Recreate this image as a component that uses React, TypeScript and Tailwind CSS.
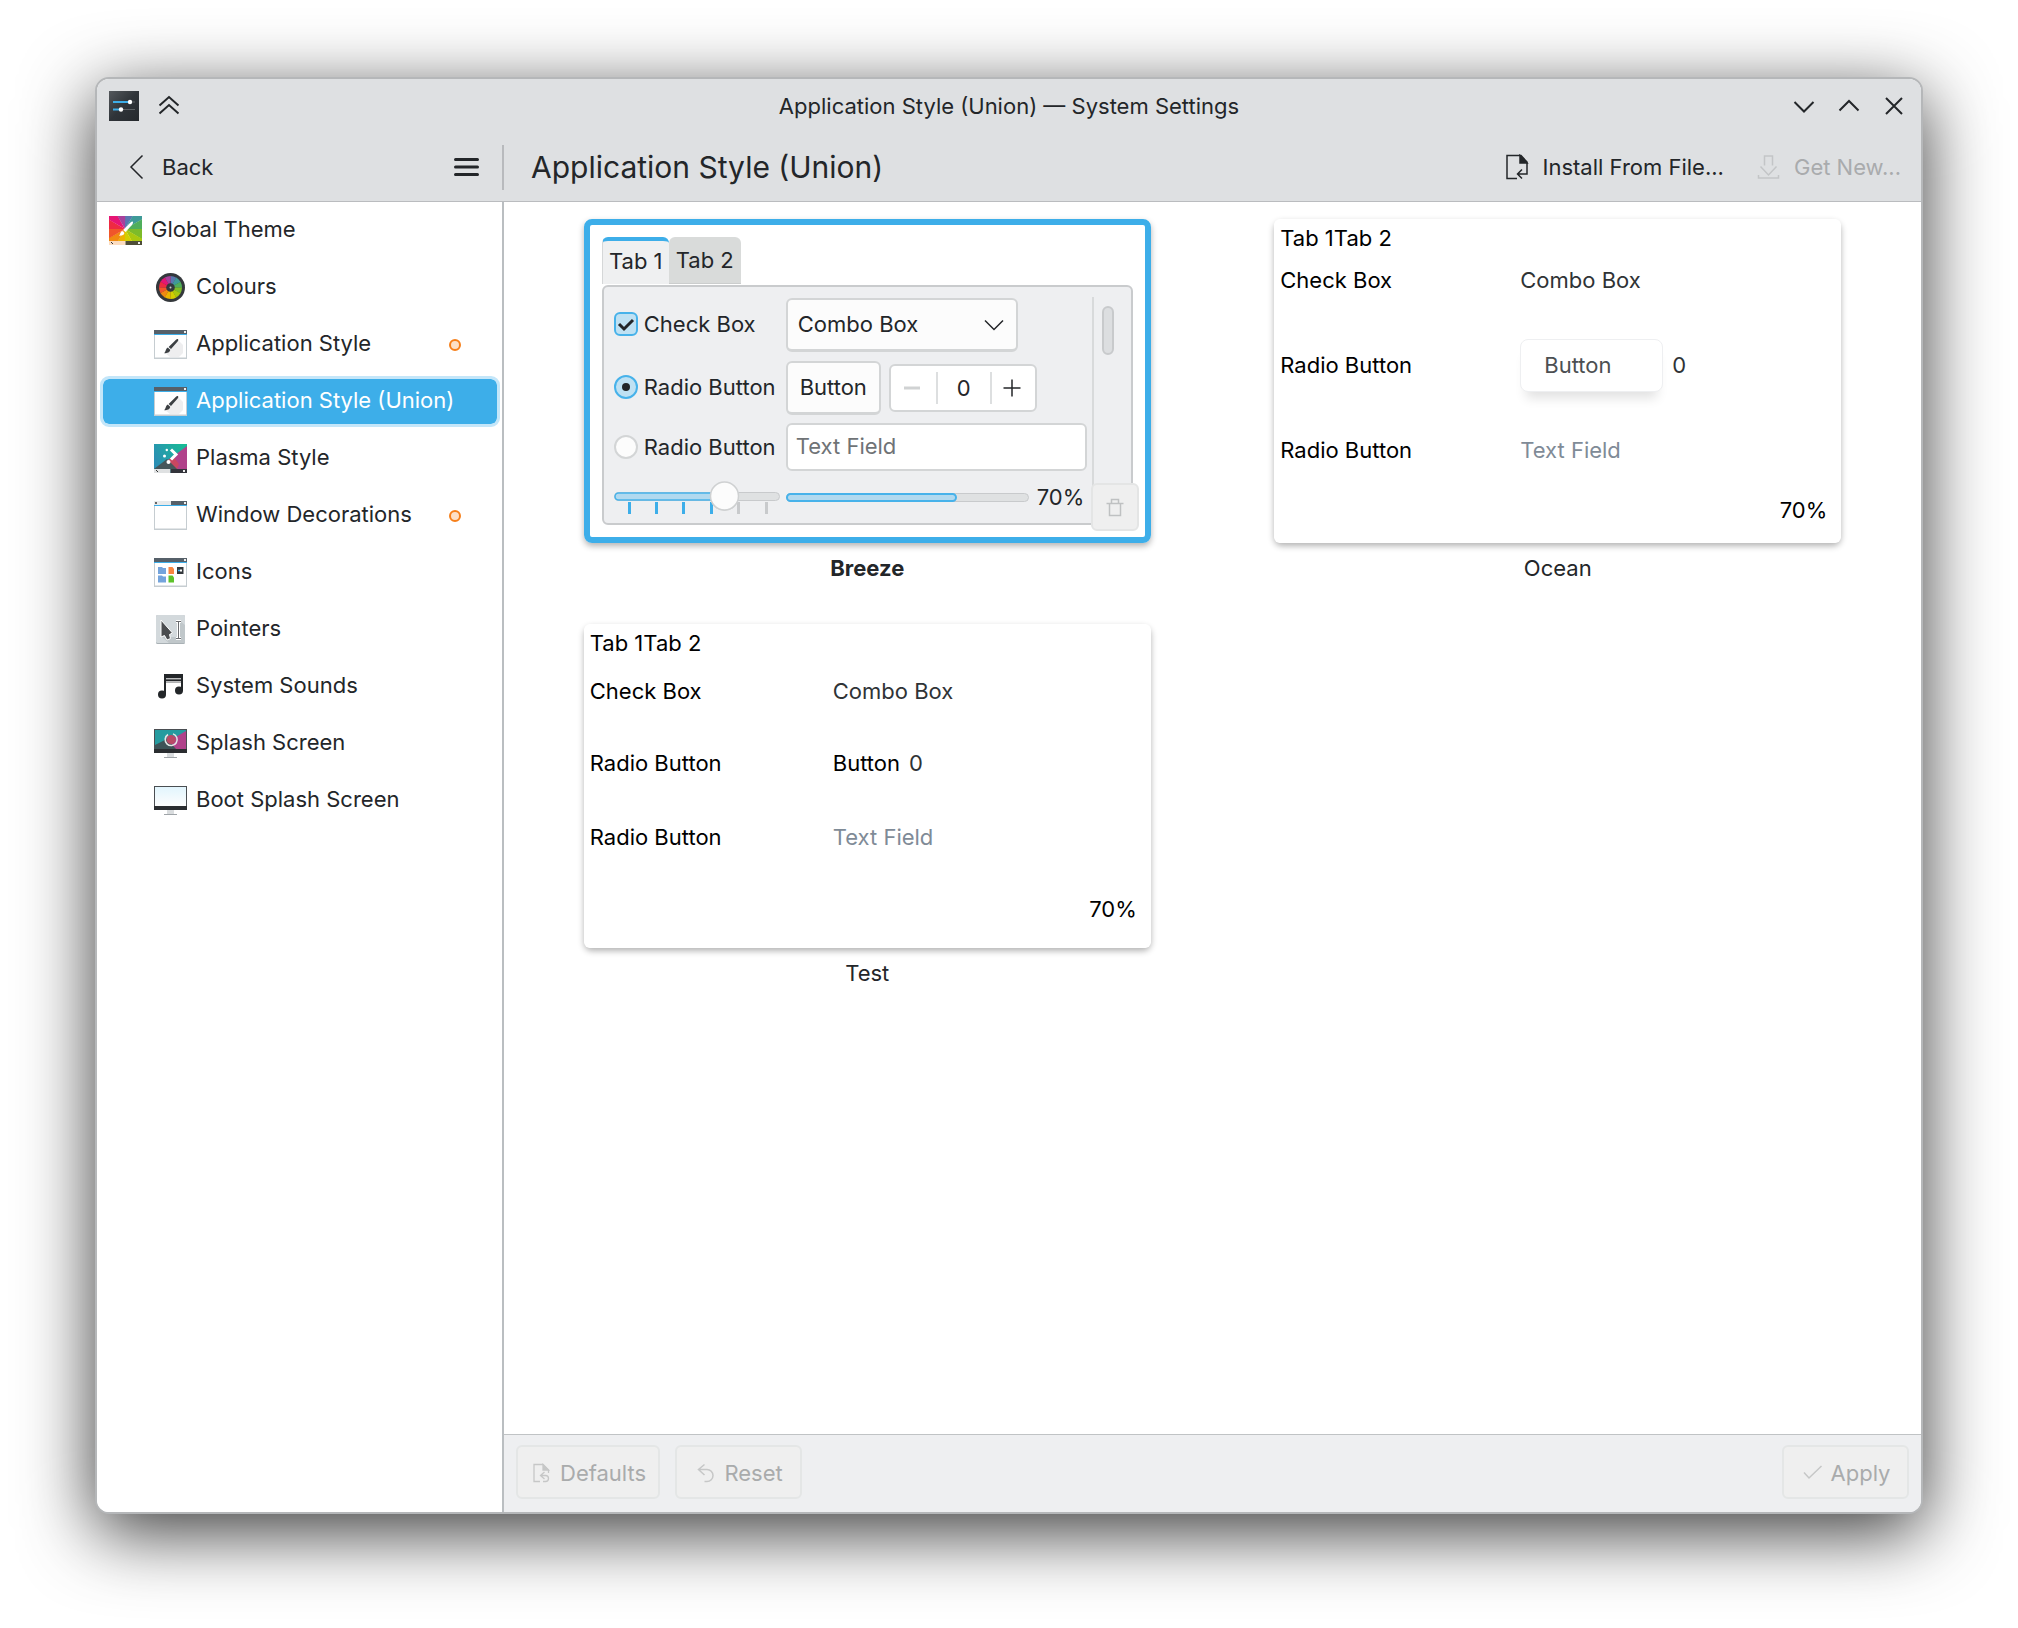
import React from "react";
import clsx from "clsx";

type IconProps = { className?: string };

const WHEEL = [
  "#5a78b0", "#3f9a98", "#4fae5c", "#7dbb2a", "#a9c80f", "#d3cf00",
  "#ecb400", "#f08a12", "#f0562a", "#ee2a42", "#e61574", "#a8409c",
];

function Wheel({ cx, cy, r }: { cx: number; cy: number; r: number }) {
  return (
    <>
      {WHEEL.map((color, i) => {
        const a = ((i * 30 - 90) * Math.PI) / 180;
        const b = ((i * 30 - 59) * Math.PI) / 180;
        return (
          <path
            key={color}
            fill={color}
            d={`M${cx} ${cy}L${cx + r * Math.cos(a)} ${cy + r * Math.sin(a)}A${r} ${r} 0 0 1 ${cx + r * Math.cos(b)} ${cy + r * Math.sin(b)}Z`}
          />
        );
      })}
    </>
  );
}

function GlobalThemeIcon() {
  return (
    <svg width="33" height="29" viewBox="0 0 33 29" className="shrink-0">
      <clipPath id="gt">
        <rect width="33" height="25" />
      </clipPath>
      <g clipPath="url(#gt)">
        <Wheel cx={16} cy={13} r={24} />
      </g>
      <path d="M23.5 5.5c1 .6.6 1.8-.6 3.4L16.500 16l-2.300-2L20.500 7.500c1.300-1.300 2.300-2.300 3-2z" fill="#fff" />
      <path d="M13.300 15l2 1.800c.2 2.200-2.600 3-5.300 3 1.500-1.300 1.200-4.300 3.300-4.800z" fill="#fff" />
      <rect y="25" width="16.500" height="4" fill="#fbdcc0" />
      <rect x="16.500" y="25" width="16.500" height="4" fill="#4e4d38" />
      <path d="M2 26l2 2" stroke="#333" />
      <rect x="29" y="26" width="2" height="2" fill="#eee" />
    </svg>
  );
}

function ColoursIcon() {
  return (
    <svg width="33" height="29" viewBox="0 0 33 29" className="shrink-0">
      <circle cx="16.500" cy="14.500" r="14.500" fill="#34383c" />
      <Wheel cx={16.5} cy={14.5} r={11.5} />
      <circle cx="16.500" cy="14.500" r="4.300" fill="#34383c" />
      <circle cx="16.500" cy="14.500" r="1" fill="#ccc" />
    </svg>
  );
}

function WindowFrame({ split, children }: { split?: boolean; children?: React.ReactNode }) {
  return (
    <svg width="33" height="29" viewBox="0 0 33 29" className="shrink-0">
      <rect width="33" height="29" fill="#c6cdd1" />
      <rect x="1" y="5" width="31" height="22.500" fill="#fff" />
      <rect width="33" height="4" fill="#566069" />
      {split && <rect width="17" height="4" fill="#e8eaeb" />}
      {split && <rect x="1" y="1" width="2" height="2" fill="#666" />}
      <rect y="4" width="33" height="1" fill="#3daee9" />
      <rect x="30" y="1" width="2" height="2" fill="#eee" />
      {children}
    </svg>
  );
}

function AppStyleIcon() {
  return (
    <WindowFrame>
      <path d="M24 10l5 5v8l-4 4h-9l-5-4z" fill="#eeeeef" />
      <path d="M24 9.200c.7.500.3 1.500-.6 2.500L17 19l-2.400-2L21 10.700c1.200-1.100 2.200-1.900 3-1.500z" fill="#3c4043" />
      <path d="M13.800 17.600l2.400 2.100c0 2.400-3 3.500-6 3.500 1.700-1.200 1.500-4.900 3.600-5.600z" fill="#3c4043" />
    </WindowFrame>
  );
}

function WindowDecoIcon() {
  return <WindowFrame split />;
}

function IconsIcon() {
  return (
    <WindowFrame>
      <path d="M4 9h4l1 1h3v6H4zM4 17.500h4l1 1h3v6H4z" fill="#74a4dc" />
      <path d="M14.500 9h4l1.500 2v5h-5.500z" fill="#f98640" />
      <path d="M14.500 17.500h4l1.500 2v5h-5.500z" fill="#5ec32a" />
      <rect x="23" y="9" width="6.500" height="7" fill="#33383c" />
      <path d="M24 12.500h2" stroke="#3daee9" strokeWidth="1.500" />
      <path d="M26 12.500h2" stroke="#fff" strokeWidth="2" />
    </WindowFrame>
  );
}

function PlasmaIcon() {
  return (
    <svg width="33" height="29" viewBox="0 0 33 29" className="shrink-0">
      <linearGradient id="teal" x1="0" x2="1" y1="0.500" y2="0">
        <stop offset="0" stopColor="#2b8fb4" />
        <stop offset="1" stopColor="#16bf93" />
      </linearGradient>
      <rect width="33" height="29" fill="url(#teal)" />
      <path d="M33 2v24H21L13 17z" fill="#b0428a" />
      <path d="M13 17l6-5 6 8-2 5h-5z" fill="#c94760" />
      <path d="M0 25l13-10 10 10z" fill="#45565a" />
      <rect y="25" width="16.500" height="4" fill="#dfe1e2" />
      <rect x="16.500" y="25" width="16.500" height="4" fill="#33343b" />
      <path d="M2 26l2 2" stroke="#333" />
      <rect x="29" y="26" width="2" height="2" fill="#eee" />
      <path d="M17 5.500l5 5-5 5" stroke="#fff" strokeWidth="3" fill="none" />
      <circle cx="12.800" cy="6" r="1.200" fill="#fff" />
      <circle cx="10.500" cy="12" r="1.500" fill="#fff" />
      <circle cx="14.500" cy="18" r="2" fill="#fff" />
    </svg>
  );
}

function PointersIcon() {
  return (
    <svg width="33" height="29" viewBox="0 0 33 29" className="shrink-0">
      <rect x="2" width="29" height="29" rx="1.500" fill="#a9b1b5" />
      <rect x="2" width="29" height="28" rx="1.500" fill="#d3d9dc" />
      <path d="M8 22l7 6h16V10l-5-4-2 16z" fill="#c0c7ca" />
      <path d="M7 5v17l3.500-1.500L13 25l3.500-1.500-1-4 3-1.500z" fill="#4b4d4f" stroke="#fff" strokeWidth="1" />
      <path d="M22 6.500h5M22 23.500h5M24.500 6.500v17" stroke="#fff" strokeWidth="3" />
      <path d="M22 6.500h5M22 23.500h5M24.500 6.500v17" stroke="#6b6d70" strokeWidth="1" />
    </svg>
  );
}

function SoundsIcon() {
  return (
    <svg width="33" height="29" viewBox="0 0 33 29" className="shrink-0">
      <path d="M10 2h19v17h-2V10.500H12V22h-2z" fill="#232629" />
      <path d="M12 6.800h15M12 9.800h15" stroke="#fff" strokeWidth="1" />
      <circle cx="8" cy="22.500" r="4" fill="#232629" />
      <circle cx="25" cy="18.500" r="4" fill="#232629" />
    </svg>
  );
}

function MonitorIcon({ splash }: { splash?: boolean }) {
  return (
    <svg width="33" height="29" viewBox="0 0 33 29" className="shrink-0">
      <linearGradient id="sky" x1="0" x2="0" y1="0" y2="1">
        <stop offset="0" stopColor="#e2f5fd" />
        <stop offset="1" stopColor="#fdfdfd" />
      </linearGradient>
      <rect width="33" height="24" fill="#4a4e52" />
      <rect y="20" width="33" height="4" fill="#2a2d30" />
      <rect x="1" y="1" width="31" height="19" fill="url(#sky)" />
      {splash && (
        <>
          <rect x="1" y="1" width="31" height="19" fill="#259b9f" />
          <path d="M32 2v18H21L13 13z" fill="#b0428a" />
          <path d="M1 16l12-6 9 10H1z" fill="#3d5357" />
          <circle cx="17" cy="10.500" r="4.500" fill="#b84a66" />
          <path d="M14 5.500a6 6 0 1 0 5-.6" stroke="#e5e5e5" strokeWidth="1.500" fill="none" />
        </>
      )}
      <rect x="13" y="24" width="7" height="4" fill="#d9dcde" />
      <rect x="10" y="28" width="13" height="1" fill="#9fa4a8" />
    </svg>
  );
}

function SplashIcon() {
  return <MonitorIcon splash />;
}

function SettingsIcon() {
  return (
    <svg width="30" height="30" viewBox="0 0 30 30" className="shrink-0">
      <linearGradient id="dark" x1="0" x2="1" y1="0" y2="1">
        <stop offset="0" stopColor="#54585c" />
        <stop offset="0.500" stopColor="#2f3439" />
        <stop offset="1" stopColor="#25292d" />
      </linearGradient>
      <rect width="30" height="30" fill="url(#dark)" />
      <path d="M4 11h22M4 18.500h22" stroke="#5d6164" strokeWidth="1" />
      <path d="M4 11h17M4 18.500h8" stroke="#3daee9" strokeWidth="2" />
      <circle cx="21" cy="11" r="2.200" fill="#fff" />
      <circle cx="12" cy="18.500" r="2.200" fill="#fff" />
    </svg>
  );
}

// Line drawings share a 24px box
function Line({ d, className, size = 24, width = 1.5 }: IconProps & { d: string; size?: number; width?: number }) {
  return (
    <svg
      width={size}
      height={size}
      viewBox={`0 0 ${size} ${size}`}
      fill="none"
      stroke="currentColor"
      strokeWidth={width}
      className={clsx("shrink-0", className)}
    >
      <path d={d} />
    </svg>
  );
}

function InstallIcon() {
  return (
    <svg width="24" height="26" viewBox="0 0 24 26" fill="none" stroke="currentColor" strokeWidth="1.500" className="shrink-0">
      <path d="M12 24.500H2V1.500h14L22 8v12H12.500M17 15.500L12.500 20l4.500 4.500" />
      <path d="M15 1.500V9h7z" fill="currentColor" />
    </svg>
  );
}

function DefaultsIcon() {
  return (
    <svg width="24" height="24" viewBox="0 0 24 24" fill="none" stroke="currentColor" strokeWidth="1.300" className="shrink-0">
      <path d="M10 20.500H4V3.500h9l5.500 5.500v3M14.500 11l-4 3.500 4 3.500M10.500 14.500h5a3 3 0 0 1 0 6h-2.500" />
      <path d="M13 3.500V9h5.500z" fill="currentColor" />
    </svg>
  );
}

const items = [
  { label: "Colours", icon: ColoursIcon },
  { label: "Application Style", icon: AppStyleIcon, changed: true },
  { label: "Application Style (Union)", icon: AppStyleIcon, active: true },
  { label: "Plasma Style", icon: PlasmaIcon },
  { label: "Window Decorations", icon: WindowDecoIcon, changed: true },
  { label: "Icons", icon: IconsIcon },
  { label: "Pointers", icon: PointersIcon },
  { label: "System Sounds", icon: SoundsIcon },
  { label: "Splash Screen", icon: SplashIcon },
  { label: "Boot Splash Screen", icon: MonitorIcon },
];

function TitleBar() {
  return (
    <div className="h-[54px] px-3 flex items-center justify-between">
      <div className="w-[120px] flex items-center gap-[15px]">
        <SettingsIcon />
        <button aria-label="Keep above">
          <Line size={30} width={2} d="M5.500 14.500L15 6l9.500 8.500M5.500 22.500L15 14l9.500 8.500" />
        </button>
      </div>
      <p>Application Style (Union) — System Settings</p>
      <div className="w-[120px] flex items-center gap-[15px]">
        <button aria-label="Minimise">
          <Line size={30} width={2} d="M5.500 11l9.500 9.500 9.500-9.500" />
        </button>
        <button aria-label="Maximise">
          <Line size={30} width={2} d="M5.500 19.500L15 10l9.500 9.500" />
        </button>
        <button aria-label="Close">
          <Line size={30} width={2} d="M7 7l16 16M23 7L7 23" />
        </button>
      </div>
    </div>
  );
}

function ToolBar() {
  return (
    <div className="h-[68px] flex items-center">
      <div className="w-[405px] shrink-0 flex items-center justify-between pl-[27px] pr-[23px]">
        <button className="flex items-center gap-3">
          <Line size={26} d="M18.500 1.500L7 13l11.500 11.500" />
          Back
        </button>
        <button aria-label="Menu">
          <svg width="25" height="20" viewBox="0 0 25 20" className="shrink-0">
            <path d="M1.500 2.500h22M1.500 10h22M1.500 17.500h22" stroke="#232629" strokeWidth="3" strokeLinecap="round" />
          </svg>
        </button>
      </div>
      <div className="w-[2px] h-[45px] bg-[#b8babd]" />
      <h1 className="flex-1 pl-[27px] text-[30px] leading-9">Application Style (Union)</h1>
      <div className="flex items-center gap-[33px] pr-5">
        <button className="flex items-center gap-[14px]">
          <InstallIcon />
          Install From File...
        </button>
        <button disabled className="flex items-center gap-[13px] text-[#a9abad]">
          <Line size={24} className="text-[#c3c5c7]" d="M7.500 10.500V1h8v9.500M3.500 11.500l8 8.500 8-8.500M1.500 20v3h20v-3" />
          Get New...
        </button>
      </div>
    </div>
  );
}

function SideBar() {
  return (
    <nav className="w-[407px] shrink-0 bg-white border-r-2 border-[#babec1] pl-[3px] pr-[2px]">
      <a href="#global-theme" className="h-[51px] my-[3px] pl-[9px] flex items-center gap-[9px]">
        <GlobalThemeIcon />
        <span className="pb-1">Global Theme</span>
      </a>
      {items.map(({ label, icon: Icon, changed, active }) => (
        <a
          key={label}
          href={"#" + label.toLowerCase().replace(/\W+/g, "-")}
          className={clsx(
            "h-[51px] mt-[6px] pl-[51px] pr-9 flex items-center gap-[9px] rounded-[9px] border-[3px] bg-clip-padding",
            active ? "border-[#c4e6f9] bg-[#3daee9] text-white" : "border-transparent"
          )}
        >
          <Icon />
          <span className="flex-1 whitespace-nowrap pb-1">{label}</span>
          {changed && <span className="size-3 rounded-full border-2 border-[#f67f1a] bg-[#fddfc6]" />}
        </a>
      ))}
    </nav>
  );
}

const raised = "h-[54px] pb-[2px] rounded-md border-2 border-[#d3d5d6] border-b-[3px] bg-[#fcfcfc]";

function BreezePreview() {
  return (
    <div className="relative h-full rounded-lg border-[6px] border-[#3daee9] bg-white p-3 flex flex-col">
      <div className="flex" role="tablist">
        <button role="tab" aria-selected="true" className="h-[47px] w-[67px] rounded-t-md border-t-4 border-t-[#3daee9] border-l border-l-[#d5d7d8] bg-[#eff0f1] pb-1">
          Tab 1
        </button>
        <button role="tab" aria-selected="false" className="h-[47px] w-[72px] rounded-t-md border-b border-[#cbcdcd] bg-[#d9dbda]">
          Tab 2
        </button>
      </div>
      <div className="mt-[1px] flex-1 flex rounded-md border-2 border-[#c9cbcd] bg-[#eeeff1] pl-[10px]">
        <div className="flex-1 flex flex-col gap-2 pt-[11px]">
          <div className="flex items-center pb-px">
            <label className="w-[172px] flex items-center gap-[6px] pb-[2px]">
              <span className="grid size-6">
                <input type="checkbox" defaultChecked className="col-start-1 row-start-1 appearance-none size-6 rounded-md border-2 border-[#47b2ea] bg-[#bfe1f3]" />
                <Line className="col-start-1 row-start-1" width={3} d="M5 12l5 5 9-9" />
              </span>
              Check Box
            </label>
            <div className="grid items-center">
              <select aria-label="Combo Box" className={clsx(raised, "col-start-1 row-start-1 w-[232px] pl-[10px] appearance-none")}>
                <option>Combo Box</option>
              </select>
              <Line className="col-start-1 row-start-1 justify-self-end mr-3 pointer-events-none" d="M3 7.500l9 9 9-9" />
            </div>
          </div>
          <div className="flex items-center">
            <label className="w-[172px] flex items-center gap-[6px] pb-[2px] whitespace-nowrap">
              <span className="grid size-6 place-items-center">
                <input type="radio" name="breeze" defaultChecked className="col-start-1 row-start-1 appearance-none size-6 rounded-full border-2 border-[#47b2ea] bg-[#bfe1f3]" />
                <span className="col-start-1 row-start-1 size-2 rounded-full bg-[#232629]" />
              </span>
              Radio Button
            </label>
            <button className={clsx(raised, "w-[95px]")}>Button</button>
            <div className="ml-2 w-[148px] h-12 flex items-center rounded-md border-2 border-[#d3d5d6] bg-white">
              <button aria-label="Decrease" className="shrink-0 pl-[9px] pr-3 text-[#d0d2d3]">
                <Line width={3} d="M4 12h16" />
              </button>
              <input aria-label="Value" defaultValue="0" className="h-8 w-14 shrink-0 border-x-2 border-[#dddfe0] text-center" />
              <button aria-label="Increase" className="shrink-0 pl-2">
                <Line d="M3.500 12h17M12 3.500v17" />
              </button>
            </div>
          </div>
          <div className="flex items-center">
            <label className="w-[172px] flex items-center gap-[6px] whitespace-nowrap">
              <input type="radio" name="breeze" className="appearance-none size-6 rounded-full border-2 border-[#d3d5d6] bg-[#fcfcfc]" />
              Radio Button
            </label>
            <input aria-label="Text Field" placeholder="Text Field" className="w-[301px] h-12 pl-2 pb-[2px] rounded-md border-2 border-[#d3d5d6] bg-white placeholder:text-[#6f7376]" />
          </div>
          <div className="h-9 flex items-center">
            <div className="w-[172px] shrink-0">
              <Slider />
            </div>
            <div className="w-[243px] shrink-0 h-[9px] rounded-full border border-[#c8cacc] bg-[#dfe1e2]">
              <div className="-m-px h-[9px] w-[71%] rounded-full border-2 border-[#47b2ea] bg-[#b1d9ef]" />
            </div>
            <span className="ml-2">70%</span>
          </div>
        </div>
        <div className="mt-[10px] w-[39px] shrink-0 border-l-2 border-[#d8dadb] pl-2 pt-[9px]">
          <div className="w-3 h-[49px] rounded-full border-2 border-[#c8cacc] bg-[#dcdee0]" />
        </div>
      </div>
      <button
        disabled
        aria-label="Delete"
        className="absolute right-[6px] bottom-[6px] size-12 rounded-md border-2 border-[#e4e5e5] bg-[#efefef] text-[#bfc1c2] flex items-center justify-center"
      >
        <Line d="M3.500 8.500h17M8.500 8V4.500h7V8M6.500 9v11.500h11V9" />
      </button>
    </div>
  );
}

function Slider() {
  return (
    <div className="grid h-[34px] w-[166px]">
      <svg width="166" height="34" viewBox="0 0 166 34" className="col-start-1 row-start-1">
        {[14, 41, 68, 96, 123, 151].map((x, i) => (
          <rect key={x} x={x} y="22" width="3" height="12" fill={i < 4 ? "#3daee9" : "#c8cacc"} />
        ))}
        <rect x="0.500" y="12.500" width="165" height="8" rx="4" fill="#dfe1e2" stroke="#c8cacc" />
        <rect x="1" y="13" width="115" height="7" rx="3.500" fill="#b1d9ef" stroke="#47b2ea" strokeWidth="1.500" />
        <circle cx="110.500" cy="17" r="14" fill="#cfd1d2" />
        <circle cx="110.500" cy="16" r="14" fill="#fcfcfc" stroke="#cfd1d2" strokeWidth="1.500" />
      </svg>
      <input type="range" aria-label="Slider" defaultValue={67} className="col-start-1 row-start-1 opacity-0" />
    </div>
  );
}

type PlainProps = {
  name: string;
  rows: string;
  cols: string;
  buttonClass: string;
};

// Styles without their own controls fall back to bare text
function PlainPreview({ name, rows, cols, buttonClass }: PlainProps) {
  return (
    <div className="h-full rounded-md bg-white pl-[6px] pr-[14px] pt-[5px] text-black">
      <div className="h-7 flex items-center" role="tablist">
        <button role="tab">Tab 1</button>
        <button role="tab">Tab 2</button>
      </div>
      <div className={clsx("grid items-center", rows, cols)}>
        <label>
          <input type="checkbox" className="sr-only" />
          Check Box
        </label>
        <select aria-label="Combo Box" className="appearance-none text-[#2f3336]">
          <option>Combo Box</option>
        </select>
        <label>
          <input type="radio" name={name} className="sr-only" />
          Radio Button
        </label>
        <div className="flex items-center gap-[9px]">
          <button className={buttonClass}>Button</button>
          <input aria-label="Value" defaultValue="0" className="w-10 text-[#2f3336]" />
        </div>
        <label>
          <input type="radio" name={name} className="sr-only" />
          Radio Button
        </label>
        <input aria-label="Text Field" placeholder="Text Field" className="placeholder:text-[#7f8b97]" />
        <span className="col-span-2 text-right">70%</span>
      </div>
    </div>
  );
}

function StyleCard({ title, selected, children }: { title: string; selected?: boolean; children: React.ReactNode }) {
  return (
    <figure className="w-[567px] mb-[31px]">
      <div className="h-[324px] rounded-lg shadow-[0_3px_6px_rgba(0,0,0,0.3)]">{children}</div>
      <figcaption className={clsx("h-[50px] flex items-center justify-center", selected && "font-bold")}>{title}</figcaption>
    </figure>
  );
}

const footerButton =
  "h-[54px] min-w-[127px] px-3 pt-[2px] flex items-center justify-center gap-[6px] rounded-md border-2 border-[#e4e6e6] bg-[#efefef] text-[#a9abac]";

export default function App() {
  return (
    <div className="min-h-screen bg-white px-[95px] pt-[77px] pb-[114px] flex font-['Inter',sans-serif] text-[22px] leading-7 text-[#232629]">
      <div className="flex-1 flex flex-col overflow-hidden rounded-[14px] border-2 border-[#b5b7b9] bg-white shadow-[0_18px_72px_rgba(0,0,0,0.78)]">
        <header className="bg-[#dee0e2] border-b border-[#babcbf]">
          <TitleBar />
          <ToolBar />
        </header>
        <div className="flex-1 flex">
          <SideBar />
          <div className="flex-1 flex flex-col">
            <main className="flex-1 px-[18px] pt-[17px] grid grid-cols-2 justify-items-center content-start">
              <StyleCard title="Breeze" selected>
                <BreezePreview />
              </StyleCard>
              <StyleCard title="Ocean">
                <PlainPreview
                  name="ocean"
                  rows="grid-rows-[56px_114px_56px_64px]"
                  cols="grid-cols-[240px_minmax(0,1fr)]"
                  buttonClass="w-[143px] h-[53px] pl-[23px] text-left rounded-lg border border-[#eeeff1] bg-white text-[#4c4f52] shadow-[0_12px_12px_-6px_rgba(0,0,0,0.12)]"
                />
              </StyleCard>
              <StyleCard title="Test">
                <PlainPreview
                  name="test"
                  rows="grid-rows-[68px_76px_72px_72px]"
                  cols="grid-cols-[243px_minmax(0,1fr)]"
                  buttonClass="text-left"
                />
              </StyleCard>
            </main>
            <footer className="h-[78px] border-t border-[#c0c3c5] bg-[#eeeff1] px-3 pt-[10px] flex items-start gap-[15px]">
              <button disabled className={footerButton}>
                <span className="text-[#c6c7c7]">
                  <DefaultsIcon />
                </span>
                Defaults
              </button>
              <button disabled className={footerButton}>
                <Line className="text-[#c6c7c7]" d="M10.500 3.500L4.500 8.500l6 5.500M4.500 8.500H13a6 6 0 0 1 0 12h-2.500" />
                Reset
              </button>
              <button disabled className={clsx(footerButton, "ml-auto")}>
                <Line className="text-[#c6c7c7]" d="M3 11.500l5 5.500L20.500 5" />
                Apply
              </button>
            </footer>
          </div>
        </div>
      </div>
    </div>
  );
}
